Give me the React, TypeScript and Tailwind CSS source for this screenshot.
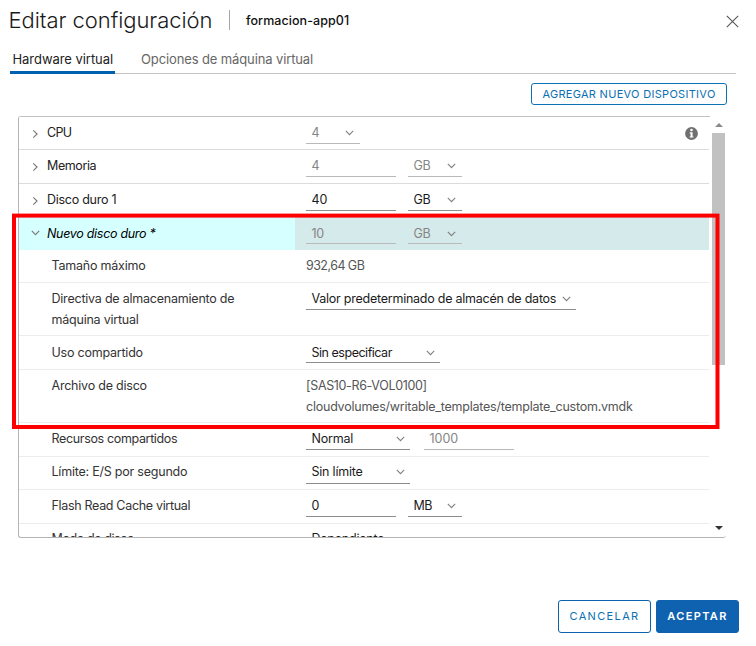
import type { ReactNode } from 'react';
import { clsx } from 'clsx';

type FieldProps = { children: ReactNode; className: string; disabled?: boolean; pad?: string };

function Chevron({ className }: { className?: string }) {
  return (
    <svg className={clsx('shrink-0', className)} width="9" height="6" viewBox="0 0 9 6" fill="none">
      <path d="M0.8 0.8 4.5 4.6 8.2 0.8" stroke="currentColor" strokeWidth="1.1" />
    </svg>
  );
}

function Field({ children, className, disabled, pad = 'pt-[5px]' }: FieldProps) {
  return (
    <div
      className={clsx(
        'h-[27px] shrink-0 border-b pl-[5.5px] whitespace-nowrap',
        disabled ? 'border-[#b9b9b9] text-[#858585]' : 'border-[#8e8e8e] text-[#1b1b1b]',
        pad,
        className,
      )}
    >
      {children}
    </div>
  );
}

function Select({ children, className, disabled, pad }: FieldProps) {
  return (
    <Field className={clsx('flex justify-between', className)} disabled={disabled} pad={pad}>
      <span>{children}</span>
      <Chevron className="mt-[8px] text-[#808080]" />
    </Field>
  );
}

function Device({
  label,
  children,
  className,
  open,
}: {
  label: ReactNode;
  children: ReactNode;
  className: string;
  open?: boolean;
}) {
  return (
    <div className={clsx('flex shrink-0', open ? 'bg-[#d5eaea]' : 'border-b border-[#dcdcdc]', className)}>
      <div className={clsx('flex w-[276px] shrink-0 pt-[5px] text-[#222]', open && 'bg-[#d6ffff]')}>
        <div className="flex w-7 justify-center pl-[5px] text-[#777]">
          {open ? <Chevron className="mt-[8px]" /> : <Chevron className="mt-[9px] -rotate-90" />}
        </div>
        {label}
      </div>
      <div className="flex grow gap-3 pl-[11px]">{children}</div>
    </div>
  );
}

function Setting({
  label,
  children,
  className,
  pad = 'pt-[5px]',
}: {
  label: ReactNode;
  children: ReactNode;
  className: string;
  pad?: string;
}) {
  return (
    <div className={clsx('flex shrink-0 border-b border-[#ececec]', className)}>
      <div className={clsx('w-[276px] shrink-0 pl-[32.5px] text-[#333]', pad)}>{label}</div>
      <div className="flex grow pl-[11px]">{children}</div>
    </div>
  );
}

export default function App() {
  return (
    <div className="relative flex h-[646px] w-[756px] flex-col overflow-hidden bg-white font-['Inter',sans-serif] text-[12.5px] leading-[21px]">
      <header className="flex h-10 shrink-0 items-center pr-[17px] pl-[8.5px]">
        <h1 className="w-[220px] text-[22px] font-light tracking-[-0.05px] whitespace-nowrap text-[#1a1a1a]">
          Editar configuración
        </h1>
        <div className="h-5 w-px bg-[#a6a6a6]" />
        <span className="ml-[16.5px] grow font-medium tracking-[0.07px] text-[#111]">formacion-app01</span>
        <svg width="13" height="13" viewBox="0 0 13 13" fill="none" className="mt-[2px]" stroke="#565656" strokeWidth="1.1">
          <path d="M.8.8 12.2 12.2M12.2.8.8 12.2" />
        </svg>
      </header>

      <nav className="mr-5 ml-[10px] flex h-[34px] shrink-0 border-b border-[#c4c4c4] text-[13px]">
        <div className="-mb-px h-[34px] w-[105px] border-b-[3px] border-[#0061b0] pt-[9px] pl-[2.5px] tracking-[-0.05px] text-[#222]">
          Hardware virtual
        </div>
        <div className="ml-[26px] pt-[9px] tracking-[-0.12px] text-[#666]">Opciones de máquina virtual</div>
      </nav>

      <button className="mt-[9px] mr-[29px] h-[22px] w-[196px] shrink-0 self-end rounded-[3px] border border-[#0b72b5] text-center text-[11px] leading-[19px] tracking-[0.3px] text-[#0b6fb3]">
        AGREGAR NUEVO DISPOSITIVO
      </button>

      <div className="mt-[11px] ml-[18px] flex h-[422px] w-[708px] shrink-0 overflow-hidden rounded-[3px] border-b border-l border-[#b5b5b5]">
        <div className="flex w-[691px] shrink-0 flex-col overflow-hidden border-t border-[#c2c2c2] pr-px tracking-[-0.22px]">
          <Device className="h-[33px]" label={<span className="tracking-[-0.71px]">CPU</span>}>
            <Select className="w-[54px] pr-[6px]" disabled>4</Select>
            <div className="grow" />
            <svg className="mt-[10px] mr-[11px]" width="13" height="13" viewBox="0 0 12 12">
              <circle cx="6" cy="6" r="5.9" fill="#707070" />
              <circle cx="6" cy="2.7" r="1.2" fill="#fff" />
              <path d="M4.4 4.9H7V8.7h.8v1H4.3v-1h.8V5.9h-.7z" fill="#fff" />
            </svg>
          </Device>
          <Device className="h-[34px]" label={<span className="tracking-[-0.41px]">Memoria</span>}>
            <Field className="w-[90px]" disabled>4</Field>
            <Select className="w-[54px] pr-[6px]" disabled>GB</Select>
          </Device>
          <Device className="h-[33px]" label={<span className="tracking-[-0.27px]">Disco duro 1</span>}>
            <Field className="w-[90px] tracking-[0]">40</Field>
            <Select className="w-[54px] pr-[6px]">GB</Select>
          </Device>
          <Device className="h-[33px]" open label={<span className="pt-px tracking-[-0.3px] text-black italic">Nuevo disco duro *</span>}>
            <Field className="w-[90px]" pad="pt-[6px]" disabled>10</Field>
            <Select className="w-[54px] pr-[6px]" pad="pt-[6px]" disabled>GB</Select>
          </Device>
          <Setting className="h-[33px]" label="Tamaño máximo">
            <span className="pt-[5px] tracking-[-0.55px] text-[#555]">932,64 GB</span>
          </Setting>
          <Setting className="h-[53px]" label={<>Directiva de almacenamiento de<br />máquina virtual</>}>
            <Select className="w-[270px] pr-[5px] tracking-[-0.24px]">Valor predeterminado de almacén de datos</Select>
          </Setting>
          <Setting className="h-[34px]" pad="pt-[6px]" label="Uso compartido">
            <Select className="w-[134px] pr-[5px] tracking-[-0.48px]" pad="pt-[6px]">Sin especificar</Select>
          </Setting>
          <Setting className="h-[53px]" label="Archivo de disco">
            <div className="pt-[5px] whitespace-nowrap text-[#555]">
              <div className="tracking-[-0.35px]">[SAS10-R6-VOL0100]</div>
              <div className="tracking-[-0.23px]">cloudvolumes/writable_templates/template_custom.vmdk</div>
            </div>
          </Setting>
          <Setting className="h-[34px]" label={<span className="tracking-[-0.35px]">Recursos compartidos</span>}>
            <Select className="w-[104px] pr-[5px]">Normal</Select>
            <Field className="ml-[14px] w-[90px] tracking-[0]" disabled>1000</Field>
          </Setting>
          <Setting className="h-[33px]" pad="pt-[4px]" label={<span className="tracking-[-0.22px]">Límite: E/S por segundo</span>}>
            <Select className="w-[104px] pr-[5px]" pad="pt-[4px]">Sin límite</Select>
          </Setting>
          <Setting className="h-[34px]" label={<span className="tracking-[-0.32px]">Flash Read Cache virtual</span>}>
            <Field className="w-[90px]">0</Field>
            <Select className="ml-3 w-[54px] pr-[6px] tracking-[-0.48px]">MB</Select>
          </Setting>
          <Setting className="h-[34px]" pad="pt-[4px]" label={<span className="tracking-[-0.4px]">Modo de disco</span>}>
            <Field className="w-[134px]" pad="pt-[4px]">Dependiente</Field>
          </Setting>
        </div>
        <div className="flex grow flex-col items-center pt-[7px] pr-px pl-[2px]">
          <svg width="8" height="4" viewBox="0 0 8 4">
            <path d="M4 0 8 4H0z" fill="#8a8a8a" />
          </svg>
          <div className="mt-[6px] h-[232px] w-[13px] bg-[#c1c1c1]" />
          <div className="grow" />
          <svg className="mb-[7px]" width="8" height="4" viewBox="0 0 8 4">
            <path d="M0 0H8L4 4z" fill="#333" />
          </svg>
        </div>
      </div>

      <footer className="mt-[62px] mr-[17px] flex shrink-0 justify-end gap-[5px] text-[11px] leading-[31px]">
        <button className="h-[33px] w-[93px] rounded-[3px] border border-[#0b62ad] text-center tracking-[1.35px] text-[#0b6fb3]">
          CANCELAR
        </button>
        <button className="h-[33px] w-[83px] rounded-[3px] border border-[#0f62b0] bg-[#0f62b0] text-center font-semibold tracking-[1.35px] text-white">
          ACEPTAR
        </button>
      </footer>

      <svg className="pointer-events-none absolute inset-0" width="756" height="646" fill="none">
        <rect x="14" y="215.6" width="703.5" height="211.4" stroke="#f00" strokeWidth="4" />
      </svg>
    </div>
  );
}
